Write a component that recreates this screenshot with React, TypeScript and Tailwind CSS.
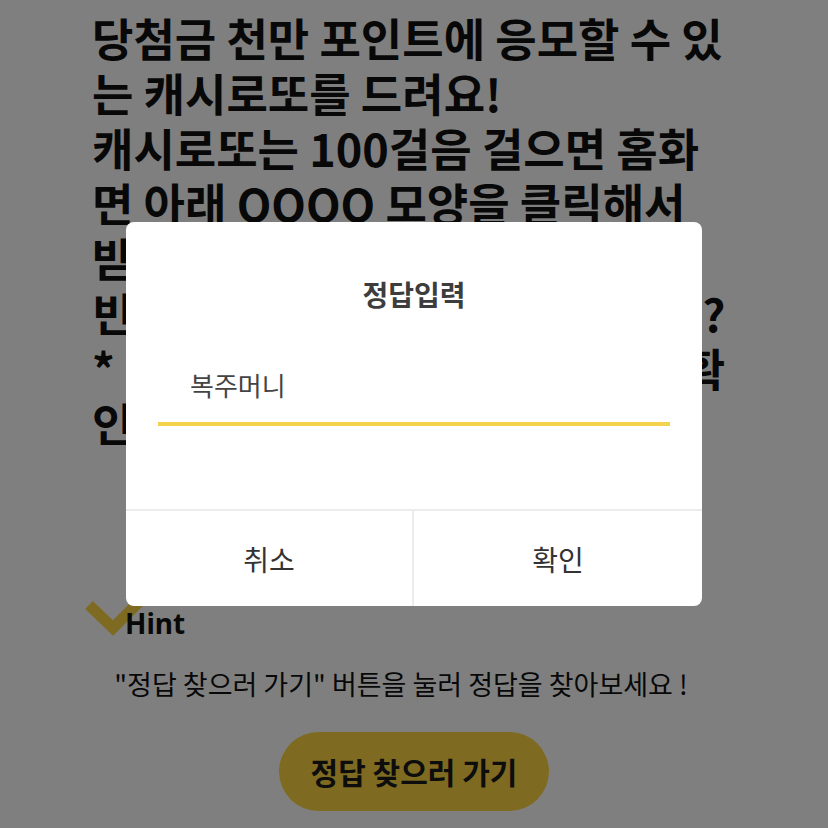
import React from "react";

const lines = [
  "당첨금 천만 포인트에 응모할 수 있",
  "는 캐시로또를 드려요!",
  "캐시로또는 100걸음 걸으면 홈화",
  "면 아래 OOOO 모양을 클릭해서",
  "받을 수 있어요. 오늘의 퀴즈",
  "빈칸에 들어갈 알맞은 말은뭘까요?",
  "* 정답은 캐시워크화면배너에서 확",
  "인할 수 있어요.",
];

function CheckMark() {
  return (
    <svg width="56" height="40" viewBox="0 0 56 40" className="overflow-visible">
      <polyline
        points="5,5 29,28 57,0"
        fill="none"
        stroke="#fdd541"
        strokeWidth="11"
      />
    </svg>
  );
}

export default function App() {
  return (
    <div className="relative min-h-[828px] bg-white font-['Noto_Sans_CJK_KR',sans-serif] text-[#111]">
      {/* quiz question */}
      <div className="pt-[10px] pl-[92px] text-[45px] font-bold leading-[55px] whitespace-nowrap">
        {lines.map((line, i) => (
          <p key={i}>{line}</p>
        ))}
      </div>

      {/* hint */}
      <div className="mt-[150px] flex h-[40px] items-start pl-[84px]">
        <CheckMark />
        <span className="-ml-[15px] pt-[3px] font-['Noto_Sans','Noto_Sans_CJK_KR',sans-serif] text-[28px] font-bold leading-[40px]">
          Hint
        </span>
      </div>
      <p className="mt-[26px] pr-[26px] text-center text-[27px] leading-[36px]">
        "정답 찾으러 가기" 버튼을 눌러 정답을 찾아보세요 !
      </p>
      <div className="mt-[30px] flex justify-center pb-[20px]">
        <button className="h-[79px] w-[270px] rounded-full bg-[#fdd541] text-[30px] font-bold text-[#1a1a1a]">
          정답 찾으러 가기
        </button>
      </div>

      {/* answer dialog */}
      <div className="fixed inset-0 flex items-center justify-center bg-black/50">
        <div className="flex h-[384px] w-[576px] flex-col rounded-[8px] bg-white">
          <div className="flex-1">
            <h2 className="pt-[54px] text-center text-[28px] font-bold leading-[36px] text-[#3d3d3d]">
              정답입력
            </h2>
            <div className="mx-[32px] mt-[55px] border-b-4 border-[#f5d24b] pb-[19px] pl-[32px] text-[26px] leading-[36px] text-[#444]">
              복주머니
            </div>
          </div>
          <div className="grid h-[97px] grid-cols-2 border-t-2 border-[#ececec] text-[28px] text-[#333]">
            <button className="border-r-2 border-[#ececec]">취소</button>
            <button>확인</button>
          </div>
        </div>
      </div>
    </div>
  );
}
